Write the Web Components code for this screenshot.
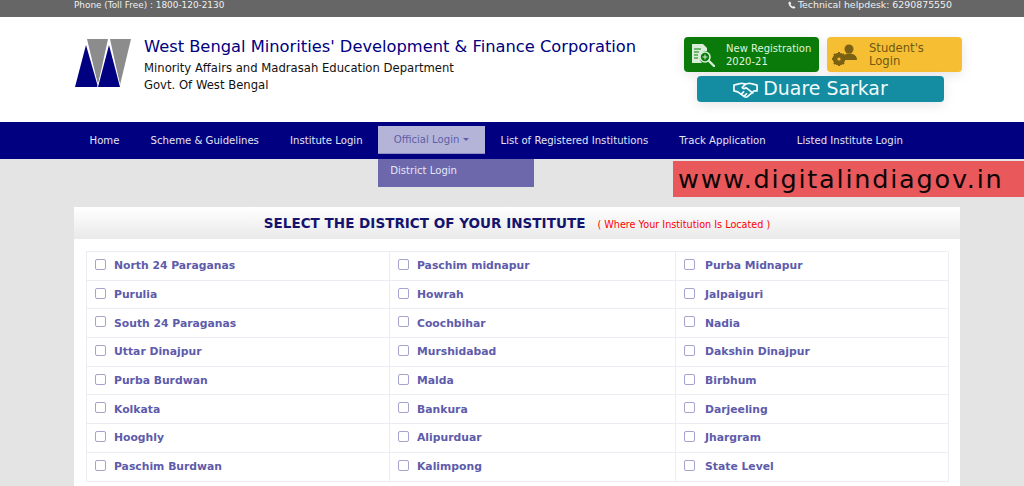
<!DOCTYPE html>
<html lang="en">
<head>
<meta charset="utf-8">
<title>West Bengal Minorities' Development & Finance Corporation</title>
<style>
  html, body { margin: 0; padding: 0; height: 486px; overflow: hidden; background: #e4e4e4; font-family: "DejaVu Sans", sans-serif; }
</style>
</head>
<body>
<wb-topbar></wb-topbar>
<wb-header></wb-header>
<wb-nav></wb-nav>
<wb-banner>www.digitalindiagov.in</wb-banner>
<wb-districts></wb-districts>

<script>
class WbTopbar extends HTMLElement {
  connectedCallback() {
    this.attachShadow({ mode: 'open' }).innerHTML = `
      <style>
        :host { display: flex; justify-content: space-between; height: 17px; background: #666; color: #f0f0f0; font-size: 8.9px; line-height: 10px; padding: 0 72px 0 74px; box-sizing: border-box; }
        svg { width: 8px; height: 8px; fill: #f0f0f0; margin-right: 2px; vertical-align: -1px; }
        .tech { font-size: 9.4px; }
      </style>
      <span>Phone (Toll Free) : 1800-120-2130</span>
      <span class="tech"><svg viewBox="0 0 16 16"><path d="M4 1 L6.500 5 L5 7 C6 9 7.500 10.500 9.500 11.500 L11.500 10 L15 12.500 C14 15 12 15.500 10 15 C5.500 13.500 2 10 1 5.500 C.7 3.500 1.500 1.500 4 1Z"/></svg>Technical helpdesk: 6290875550</span>`;
  }
}

class WbHeader extends HTMLElement {
  connectedCallback() {
    this.attachShadow({ mode: 'open' }).innerHTML = `
      <style>
        :host { display: flex; height: 105px; background: #fff; box-sizing: border-box; padding: 20px 0 0 75px; position: relative; }
        .logo { width: 57px; height: 50px; margin-top: 2px; flex: none; }
        .titles { margin-left: 12px; }
        h1 { margin: 0; font-weight: normal; font-size: 16.300px; line-height: 20px; color: #000080; white-space: nowrap; }
        p { margin: 0; font-size: 11.640px; line-height: 16.500px; color: #111; white-space: nowrap; }
        h1 + p { margin-top: 3px; }
        .actions { margin-left: auto; width: 340px; display: grid; grid-template-columns: 135px 135px; column-gap: 8px; row-gap: 4px; align-content: start; }
        a { display: flex; align-items: center; box-sizing: border-box; border-radius: 4px; text-decoration: none; box-shadow: 0 3px 12px rgba(0,0,40,.1); }
        a span { padding-top: 1px; }
        .reg { background: #0a7b0a; color: #dff5df; height: 35px; font-size: 10px; line-height: 13px; padding-left: 7px; }
        .reg svg { width: 24px; height: 24px; margin-right: 11px; flex: none; }
        .stu { background: #f5be33; color: #6e5a14; height: 35px; font-size: 11.600px; line-height: 13px; padding-left: 5px; }
        .stu svg { width: 26px; height: 22px; margin-right: 11px; flex: none; }
        .duare { grid-column: 1 / 3; margin-left: 13px; width: 247px; height: 26px; background: #148ca1; color: #f2fbfc; font-size: 18.900px; justify-content: center; padding-right: 20px; }
        .duare span { padding-top: 0; margin-top: -2px; }
        .duare svg { width: 25px; height: 17px; margin-right: 5px; flex: none; }
      </style>
      <svg class="logo" viewBox="0 0 57 50">
        <polygon points="12,0 33,0 23,46" fill="#8c8c8c"/>
        <polygon points="35,0 56,0 45,46" fill="#8c8c8c"/>
        <g fill="#000080" stroke="#fff" stroke-width="1.500" paint-order="stroke">
          <polygon points="11,6 23,48 0,48"/>
          <polygon points="34,6 45,48 23,48"/>
        </g>
      </svg>
      <div class="titles">
        <h1>West Bengal Minorities' Development &amp; Finance Corporation</h1>
        <p>Minority Affairs and Madrasah Education Department</p>
        <p>Govt. Of West Bengal</p>
      </div>
      <div class="actions">
        <a class="reg" href="#">
          <svg viewBox="0 0 24 24">
            <path d="M1 1 H12 L16 5 V8 A7 7 0 0 0 11 20 H1Z" fill="#d8eed8"/>
            <path d="M3 6 H10 M3 9 H8 M3 12 H7 M3 15 H7" stroke="#0a7b0a" stroke-width="1"/>
            <circle cx="14" cy="14" r="5" fill="#0a7b0a" stroke="#d8eed8" stroke-width="1.600"/>
            <path d="M11.500 14 H16.500 M14 11.500 V16.500" stroke="#d8eed8" stroke-width="1"/>
            <path d="M18 18 L23 23" stroke="#d8eed8" stroke-width="2.400" stroke-linecap="round"/>
          </svg>
          <span>New Registration<br>2020-21</span>
        </a>
        <a class="stu" href="#">
          <svg viewBox="0 0 26 22" fill="#7a6113">
            <circle cx="17" cy="5" r="4.500"/>
            <path d="M11 16 C11 11 13 9.500 17 9.500 C22 9.500 25 12 25 16Z"/>
            <circle cx="7" cy="15" r="4.500" fill="none" stroke="#7a6113" stroke-width="3.600"/>
            <path d="M7 8 V22 M0 15 H14 M2 10 L12 20 M12 10 L2 20" stroke="#7a6113" stroke-width="2"/>
            <circle cx="7" cy="15" r="1.600" fill="#f5be33"/>
          </svg>
          <span>Student's<br>Login</span>
        </a>
        <a class="duare" href="#">
          <svg viewBox="0 0 26 17" fill="none" stroke="#f2fbfc" stroke-width="1.800" stroke-linejoin="round" stroke-linecap="round">
            <path d="M1 4 L5 3 L9 2 C11 2 12 3 13 3 C14 3 15.500 2 17 2 L21 3 L25 4 V10 L22 10 L15 16 C14 16.500 13 16.500 12 16 L5 11 L1 10Z"/>
            <path d="M13 3 L9.500 6.500 C10.500 8 12 8 13.500 6.500 L20.500 12"/>
            <path d="M9 13 L11 11 M12 15 L14 13"/>
          </svg>
          <span>Duare Sarkar</span>
        </a>
      </div>`;
  }
}

class WbNav extends HTMLElement {
  connectedCallback() {
    const items = ['Home', 'Scheme & Guidelines', 'Institute Login', 'Official Login', 'List of Registered Institutions', 'Track Application', 'Listed Institute Login'];
    const links = items.map(t => {
      const label = t.replace('&', '&amp;');
      if (t !== 'Official Login') return `<a href="#">${label}</a>`;
      return `<div class="drop"><a class="on" href="#">${label}<i></i></a><div class="menu"><a href="#">District Login</a></div></div>`;
    }).join('');
    this.attachShadow({ mode: 'open' }).innerHTML = `
      <style>
        :host { display: flex; height: 37px; background: #000080; padding: 4px 0 0 74px; box-sizing: border-box; font-size: 10.150px; }
        a { display: flex; align-items: center; height: 28px; padding: 0 15.550px; color: #e4e4f4; text-decoration: none; white-space: nowrap; box-sizing: border-box; }
        .drop { position: relative; }
        .on { background: #b4b4d9; color: #5f5fa8; border-bottom: 1px solid #8f8fc4; }
        i { width: 0; height: 0; border: 3px solid transparent; border-top: 3px solid #5f5fa8; border-bottom: 0; margin-left: 4px; }
        .menu { position: absolute; left: 0; top: 33px; width: 156px; height: 28px; background: #6c68ab; }
        .menu a { color: #e6e6f5; padding: 0 12px; height: 22px; }
      </style>
      ${links}`;
  }
}

class WbBanner extends HTMLElement {
  connectedCallback() {
    this.attachShadow({ mode: 'open' }).innerHTML = `
      <style>
        :host { position: absolute; left: 673px; top: 161px; width: 351px; height: 36px; background: #e9585a; color: #0a0405; font-size: 25.500px; line-height: 36px; letter-spacing: 1.800px; padding-left: 5px; box-sizing: border-box; white-space: nowrap; font-family: "DejaVu Sans", sans-serif; }
      </style>
      <slot></slot>`;
  }
}

class WbDistrict extends HTMLElement {
  connectedCallback() {
    this.attachShadow({ mode: 'open' }).innerHTML = `
      <style>
        :host { display: flex; align-items: center; height: 28.700px; box-sizing: border-box; padding-left: 8px; border-right: 1px solid #ececf2; border-bottom: 1px solid #ececf2; color: #5e5bab; font-size: 10.800px; font-weight: bold; white-space: nowrap; }
        i { width: 9px; height: 9px; border: 1px solid #a5a3cf; border-radius: 2px; margin: -3px var(--label-gap, 8px) 0 0; background: #fff; flex: none; }
      </style>
      <i></i><slot></slot>`;
  }
}

class WbDistricts extends HTMLElement {
  connectedCallback() {
    const names = [
      'North 24 Paraganas', 'Paschim midnapur', 'Purba Midnapur',
      'Purulia', 'Howrah', 'Jalpaiguri',
      'South 24 Paraganas', 'Coochbihar', 'Nadia',
      'Uttar Dinajpur', 'Murshidabad', 'Dakshin Dinajpur',
      'Purba Burdwan', 'Malda', 'Birbhum',
      'Kolkata', 'Bankura', 'Darjeeling',
      'Hooghly', 'Alipurduar', 'Jhargram',
      'Paschim Burdwan', 'Kalimpong', 'State Level'
    ];
    this.attachShadow({ mode: 'open' }).innerHTML = `
      <style>
        :host { display: block; width: 886px; margin: 48px 0 0 74px; }
        header { height: 32px; display: flex; justify-content: center; align-items: center; gap: 12px; background: linear-gradient(#fff, #e9e9e9); }
        h2 { margin: 0; font-size: 13.550px; color: #14146e; font-weight: bold; white-space: nowrap; }
        span { font-size: 9.670px; color: #f00; white-space: nowrap; padding-top: 2px; }
        .body { background: #fff; padding: 12px 12px 40px; height: 260px; box-sizing: border-box; }
        .grid { display: grid; grid-template-columns: 303px 286px 273px; border-top: 1px solid #ececf2; border-left: 1px solid #ececf2; }
        wb-district:nth-child(3n) { --label-gap: 10px; }
      </style>
      <header><h2>SELECT THE DISTRICT OF YOUR INSTITUTE</h2><span>( Where Your Institution Is Located )</span></header>
      <div class="body"><div class="grid">${names.map(n => `<wb-district>${n}</wb-district>`).join('')}</div></div>`;
  }
}

customElements.define('wb-topbar', WbTopbar);
customElements.define('wb-header', WbHeader);
customElements.define('wb-nav', WbNav);
customElements.define('wb-banner', WbBanner);
customElements.define('wb-district', WbDistrict);
customElements.define('wb-districts', WbDistricts);
</script>
</body>
</html>
